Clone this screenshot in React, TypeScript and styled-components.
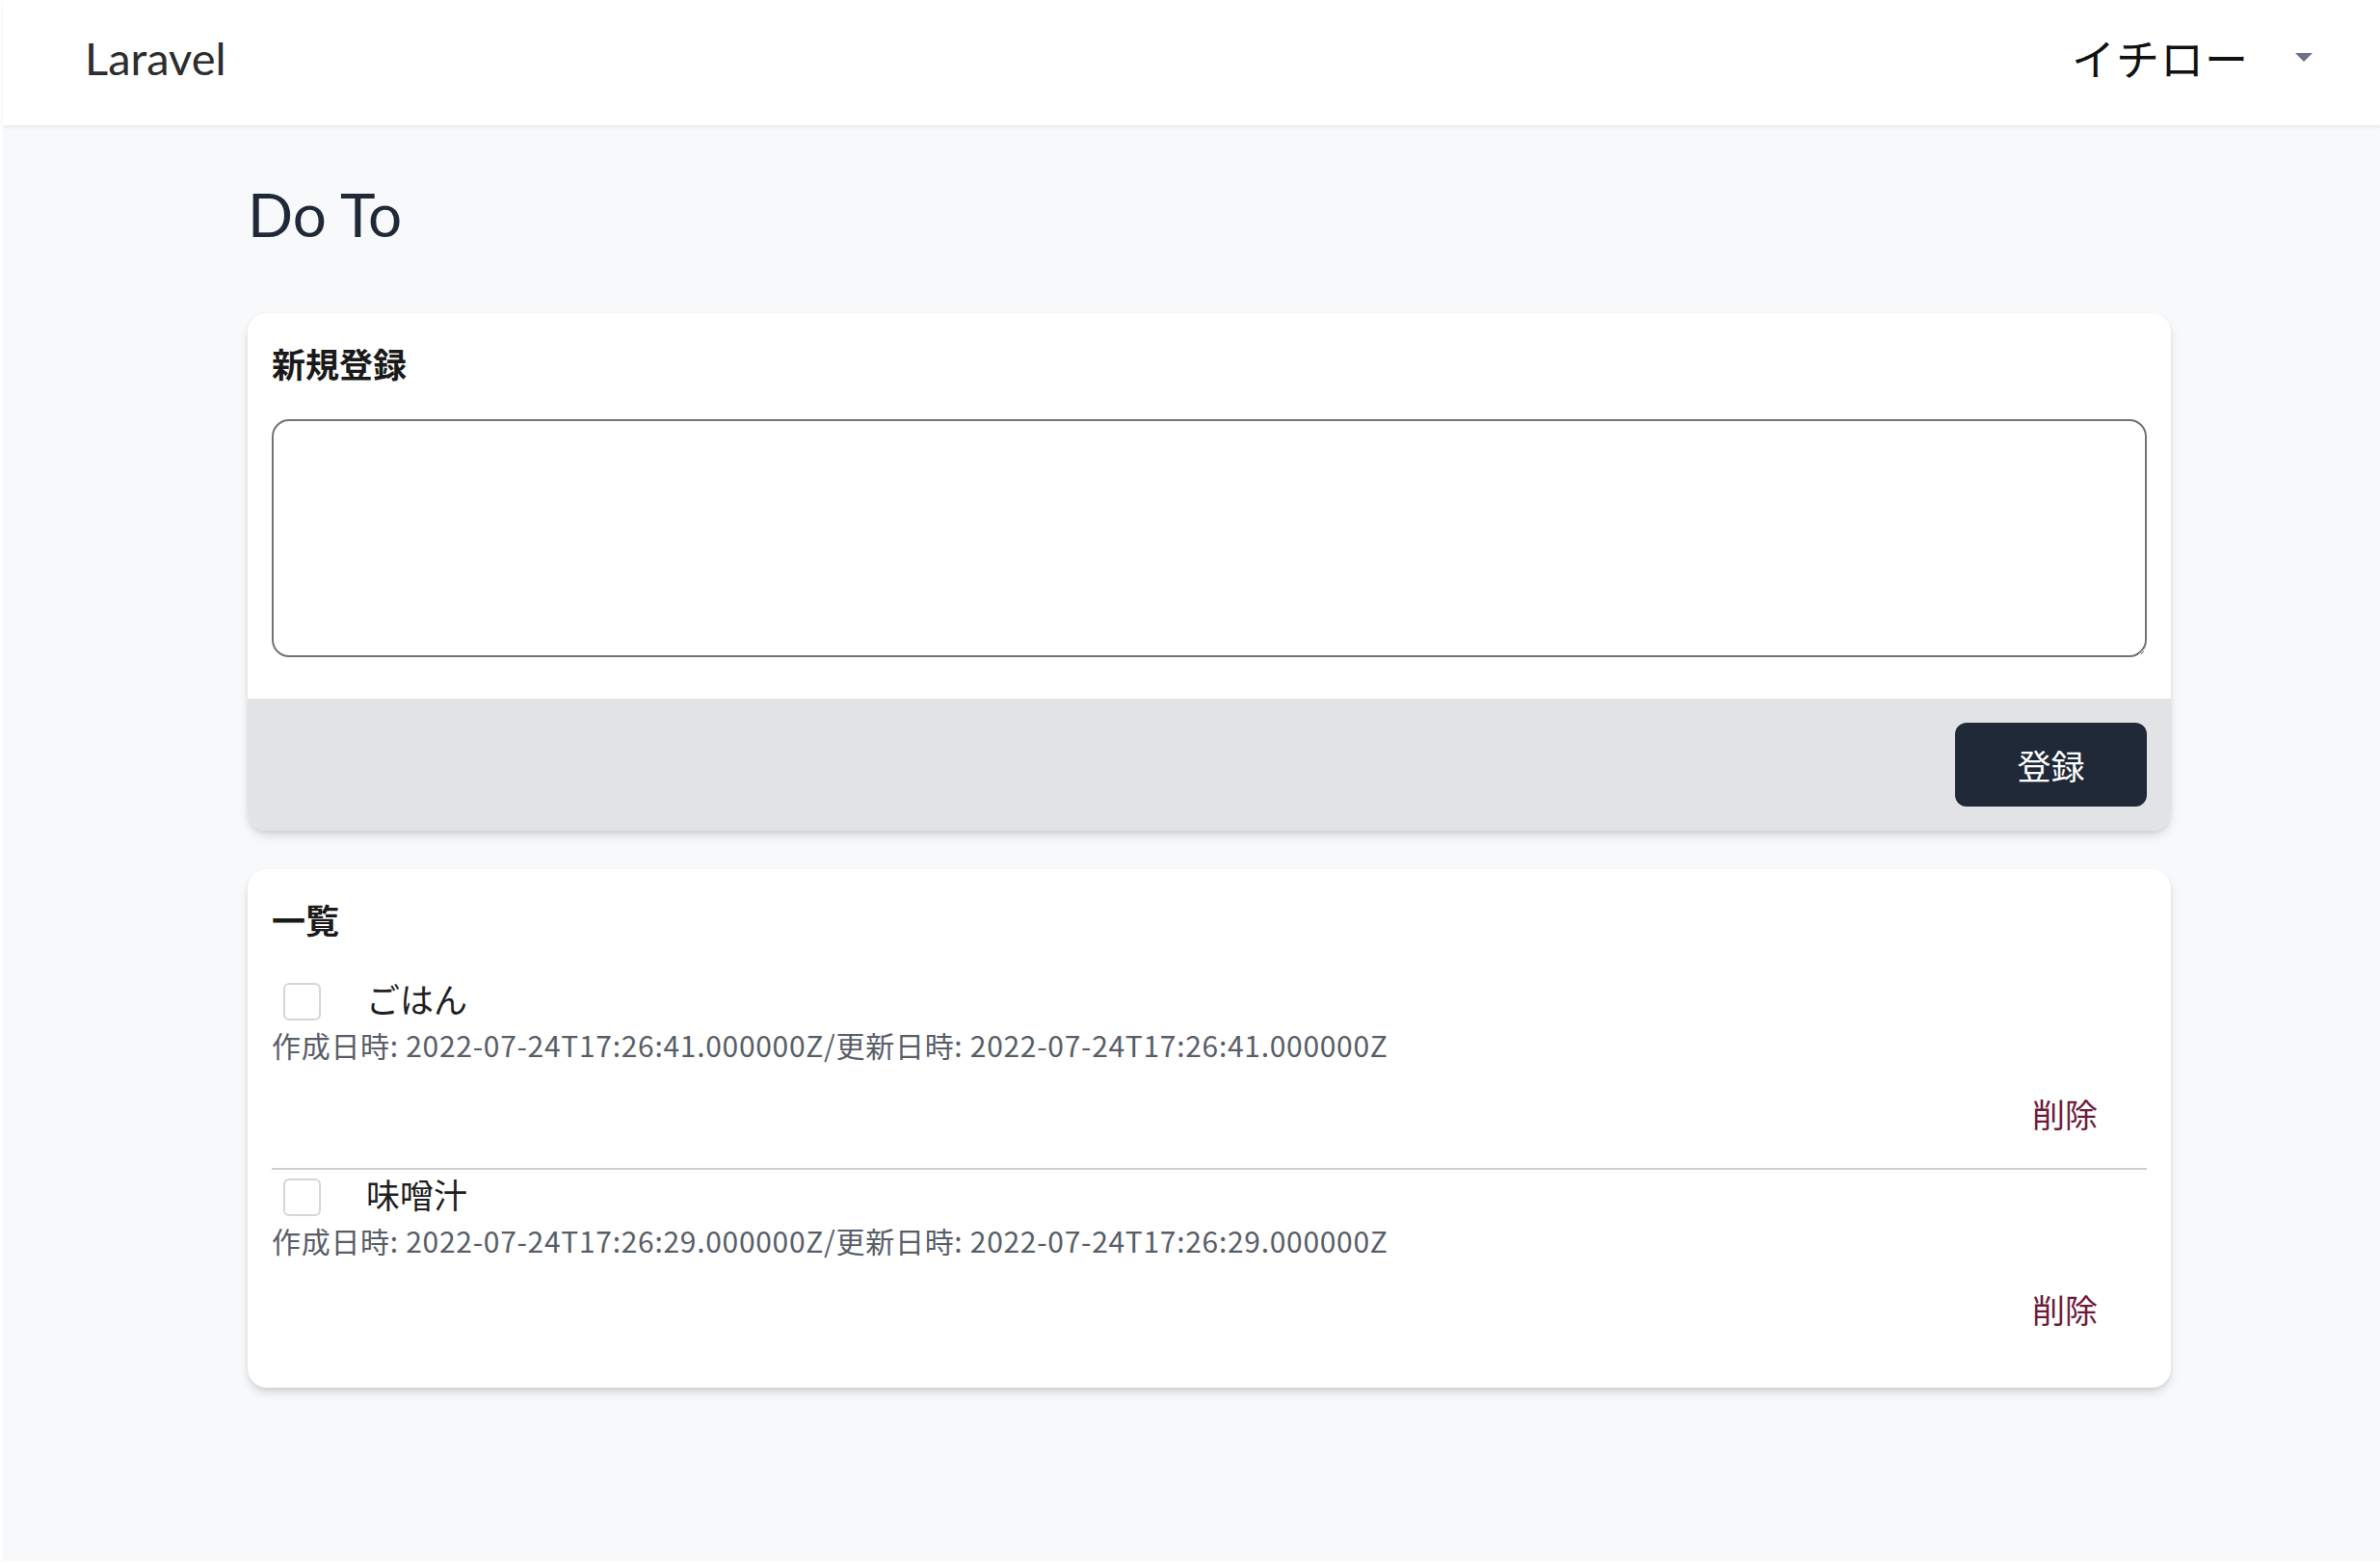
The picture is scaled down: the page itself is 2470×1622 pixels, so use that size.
import React from "react";
import styled, { createGlobalStyle } from "styled-components";

const GlobalStyle = createGlobalStyle`
    html, body {
        margin: 0;
        padding: 0;
        background: #ffffff;
    }
    body {
        font-family: Lato, "Noto Sans CJK JP", sans-serif;
        color: #1f2937;
    }
    * {
        box-sizing: border-box;
    }
`;

const Page = styled.div`
    min-height: 1620px;
    margin-left: 3px;
    background: #f8f9fa;
`;

const NavBar = styled.nav`
    height: 130px;
    background: #ffffff;
    display: flex;
    align-items: center;
    justify-content: space-between;
    padding: 0 70px 0 85px;
    box-shadow: 0 2px 4px rgba(0, 0, 0, 0.07);
    position: relative;
`;

const Brand = styled.a`
    font-family: Lato, sans-serif;
    font-size: 47px;
    color: #2d2d2d;
    text-decoration: none;
    margin-top: -10px;
`;

const UserMenu = styled.button`
    display: flex;
    align-items: center;
    gap: 48px;
    background: none;
    border: none;
    padding: 0;
    cursor: pointer;
    margin-top: -12px;
`;

const UserName = styled.span`
    font-family: "Noto Sans CJK JP", sans-serif;
    font-size: 45px;
    color: #111111;
    letter-spacing: 1px;
`;

const Caret = styled.span`
    width: 0;
    height: 0;
    border-left: 9px solid transparent;
    border-right: 9px solid transparent;
    border-top: 9px solid #6b7280;
`;

const Main = styled.main`
    width: 1996px;
    margin-left: 254px;
    padding-bottom: 80px;
`;

const Title = styled.h1`
    font-family: Lato, sans-serif;
    font-weight: 400;
    font-size: 62px;
    line-height: 80px;
    margin: 0;
    padding-top: 52px;
    color: #1f2937;
`;

const Card = styled.section<{ $first?: boolean }>`
    background: #ffffff;
    border-radius: 20px;
    overflow: hidden;
    margin-top: ${(p) => (p.$first ? "63px" : "40px")};
    box-shadow: 0 6px 12px -2px rgba(0, 0, 0, 0.16), 0 2px 4px rgba(0, 0, 0, 0.05);
`;

const CardBody = styled.div<{ $pb: number }>`
    padding: 25px 25px ${(p) => p.$pb}px 25px;
`;

const CardTitle = styled.h2`
    font-family: "Noto Sans CJK JP", sans-serif;
    font-weight: 700;
    font-size: 35px;
    line-height: 54px;
    margin: 0;
    color: #1a1a1a;
`;

const TextArea = styled.textarea`
    display: block;
    width: 100%;
    height: 247px;
    margin-top: 31px;
    border: 2px solid #737373;
    border-radius: 18px;
    background: #ffffff;
    font-size: 28px;
    padding: 12px;
    outline: none;
`;

const CardFooter = styled.div`
    background: #e2e3e5;
    padding: 25px;
    display: flex;
    justify-content: flex-end;
`;

const PrimaryButton = styled.button`
    width: 199px;
    height: 87px;
    border: none;
    border-radius: 12px;
    background: #1f2937;
    color: #ffffff;
    font-family: "Noto Sans CJK JP", sans-serif;
    font-size: 35px;
    cursor: pointer;
`;

const TodoList = styled.ul`
    list-style: none;
    margin: 30px 0 0;
    padding: 0;
`;

const TodoItem = styled.li<{ $last?: boolean }>`
    padding: 8px 0 30px;
    border-bottom: ${(p) => (p.$last ? "none" : "2px solid #cfcfcf")};
`;

const ItemRow = styled.div`
    display: flex;
    align-items: center;
    height: 40px;
    padding-left: 12px;
    gap: 47px;
`;

const Check = styled.input`
    appearance: none;
    margin: 0;
    width: 39px;
    height: 39px;
    border: 2px solid #d4d6da;
    border-radius: 6px;
    background: #ffffff;
`;

const ItemName = styled.span`
    font-family: "Noto Sans CJK JP", sans-serif;
    font-size: 35px;
    line-height: 1;
    padding-bottom: 7px;
    color: #1f1f1f;
`;

const Stamp = styled.p`
    margin: 5px 0 0;
    font-family: "Noto Sans CJK JP", sans-serif;
    font-size: 30px;
    line-height: 40px;
    letter-spacing: 0.7px;
    color: #585e68;
    white-space: nowrap;
`;

const ItemActions = styled.div`
    display: flex;
    justify-content: flex-end;
    margin-top: 26px;
    padding-right: 51px;
`;

const DeleteButton = styled.button`
    background: none;
    border: none;
    padding: 0;
    font-family: "Noto Sans CJK JP", sans-serif;
    font-size: 34px;
    line-height: 52px;
    color: #6e1a38;
    cursor: pointer;
`;

type Todo = { id: number; title: string; created: string; updated: string };

const todos: Todo[] = [
    { id: 2, title: "ごはん", created: "2022-07-24T17:26:41.000000Z", updated: "2022-07-24T17:26:41.000000Z" },
    { id: 1, title: "味噌汁", created: "2022-07-24T17:26:29.000000Z", updated: "2022-07-24T17:26:29.000000Z" },
];

const App: React.FC = () => {
    return (
        <>
            <GlobalStyle />
            <Page>
                <NavBar>
                    <Brand href="#">Laravel</Brand>
                    <UserMenu>
                        <UserName>イチロー</UserName>
                        <Caret />
                    </UserMenu>
                </NavBar>
                <Main>
                    <Title>Do To</Title>
                    <Card $first>
                        <CardBody $pb={43}>
                            <CardTitle>新規登録</CardTitle>
                            <TextArea />
                        </CardBody>
                        <CardFooter>
                            <PrimaryButton>登録</PrimaryButton>
                        </CardFooter>
                    </Card>
                    <Card>
                        <CardBody $pb={25}>
                            <CardTitle>一覧</CardTitle>
                            <TodoList>
                                {todos.map((todo, i) => (
                                    <TodoItem key={todo.id} $last={i === todos.length - 1}>
                                        <ItemRow>
                                            <Check type="checkbox" />
                                            <ItemName>{todo.title}</ItemName>
                                        </ItemRow>
                                        <Stamp>
                                            作成日時: {todo.created}/更新日時: {todo.updated}
                                        </Stamp>
                                        <ItemActions>
                                            <DeleteButton>削除</DeleteButton>
                                        </ItemActions>
                                    </TodoItem>
                                ))}
                            </TodoList>
                        </CardBody>
                    </Card>
                </Main>
            </Page>
        </>
    );
};

export default App;
